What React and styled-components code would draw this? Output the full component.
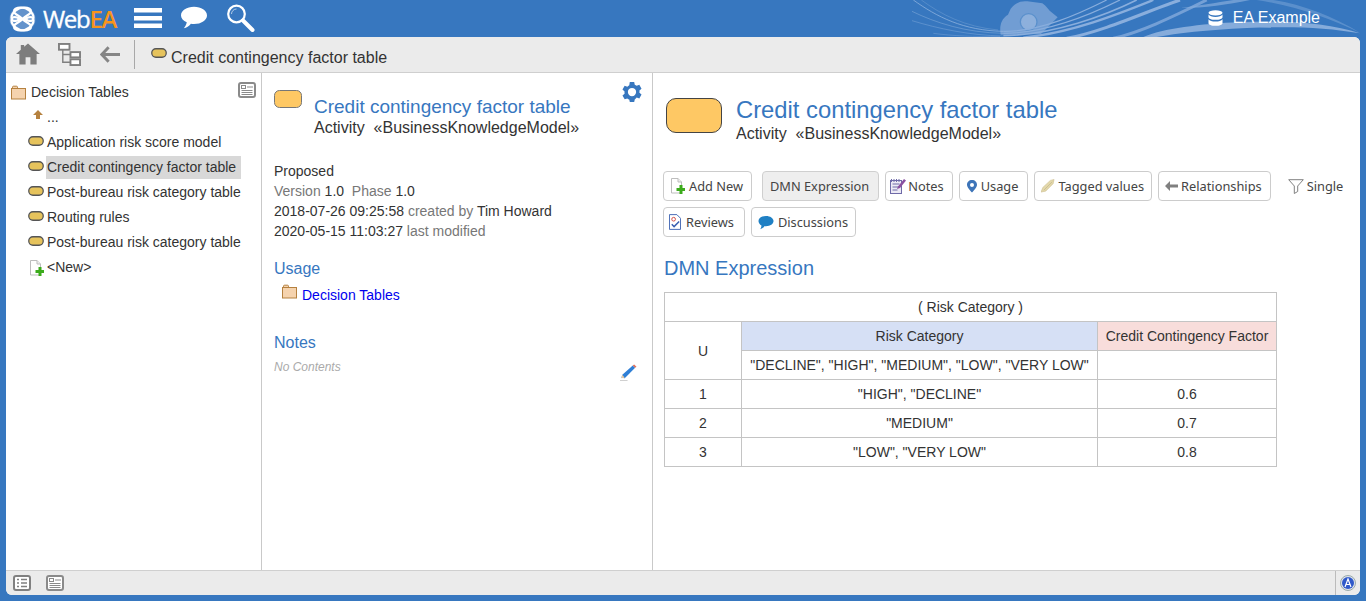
import React from "react";
import styled, { createGlobalStyle } from "styled-components";

const Global = createGlobalStyle`
  html, body { margin: 0; padding: 0; height: 100%; overflow: hidden; }
  body { font-family: "Liberation Sans", Arial, sans-serif; background: #3777bf; }
  #root { height: 100%; }
`;

const Page = styled.div`
  width: 1366px; height: 601px; display: flex; flex-direction: column;
  background: #3777bf; color: #333; font-size: 14px;
`;
const Header = styled.header`
  position: relative; height: 37px; flex: none; display: flex; align-items: flex-start;
  padding-left: 9px; overflow: hidden;
`;
const Waves = styled.svg`
  position: absolute; left: 880px; top: 0; width: 486px; height: 37px;
`;
const LogoWrap = styled.div`
  display: flex; align-items: center; height: 37px; width: 125px; flex: none;
  position: relative;
`;
const LogoText = styled.span`
  font-family: "Open Sans", sans-serif; font-size: 24px; letter-spacing: -1.3px; color: #fff;
  margin-left: 7px; font-weight: 400; line-height: 36px; -webkit-text-stroke: .35px #fff;
  b { color: #f7941d; font-weight: 600; -webkit-text-stroke: 0; }
`;
const HeadIcons = styled.div`
  display: flex; align-items: flex-start; position: relative;
`;
const HeadIcon = styled.svg`
  display: block; margin-top: ${p => p.$top}px; margin-right: ${p => p.$gap}px; flex: none;
`;
const Model = styled.div`
  position: absolute; right: 46px; top: 8px; display: flex; align-items: center; gap: 10px;
  color: #fff; font-size: 16px; line-height: 20px;
`;
const Frame = styled.div`
  flex: none; margin: 0 6px; height: 558px; display: flex; flex-direction: column;
  background: #fff; border-radius: 6px; overflow: hidden;
`;
const Toolbar = styled.div`
  flex: none; background: #ebebeb; border-bottom: 1px solid #cfcfcf;
  display: flex; align-items: center; box-sizing: content-box; height: 35px;
`;
const ToolBtn = styled.svg`
  display: block; flex: none; margin-left: ${p => p.$left}px; margin-top: ${p => p.$top || 0}px;
`;
const ToolSep = styled.div`
  width: 1px; height: 29px; background: #a8a8a8; margin-left: 14px;
`;
const Crumb = styled.div`
  display: flex; align-items: center; margin-left: 16px; font-size: 16px; color: #333;
  span { margin-left: 4px; position: relative; top: 3px; }
`;
const Body = styled.div`
  flex: 1; display: flex; min-height: 0;
`;
const LeftPane = styled.nav`
  position: relative; width: 255px; flex: none; border-right: 1px solid #c9c9c9; padding-top: 6px;
`;
const TreeRoot = styled.div`
  display: flex; align-items: center; height: 26px; padding-left: 5px; gap: 4px; color: #333;
`;
const TreeRow = styled.div`
  display: flex; align-items: center; height: 25px; padding-left: 22px; gap: 2px;
`;
const TreeIconBox = styled.span`
  width: 16px; height: 25px; flex: none; display: flex; align-items: center; justify-content: center;
`;
const TreeLabel = styled.span`
  padding: 0 5px 0 1px; height: 23px; line-height: 23px; white-space: nowrap;
  background: ${p => (p.$selected ? "#d8d8d8" : "transparent")};
`;
const PaneToggle = styled.div`
  position: absolute; right: 5px; top: 9px;
`;
const MidPane = styled.section`
  position: relative; flex: none; border-right: 1px solid #c9c9c9;
  padding: 0 12px; box-sizing: content-box; width: 366px;
`;
const MidHead = styled.div`
  display: flex; padding-top: 17px; height: 70px; box-sizing: border-box;
`;
const MidTitleBox = styled.div`
  margin-left: 12px; padding-top: 6px;
`;
const MidTitle = styled.div`
  color: #3777bf; font-size: 19px; line-height: 22px;
`;
const Sub = styled.div`
  color: #333; font-size: 16px; line-height: 20px; white-space: pre;
`;
const Gear = styled.svg`
  position: absolute; right: 9px; top: 8px;
`;
const Meta = styled.div`
  margin-top: 18px; line-height: 20px; font-size: 14px; color: #333;
  i { font-style: normal; color: #777; }
`;
const SectionTitle = styled.div`
  color: #3777bf; font-size: 16px; line-height: 20px; margin-top: ${p => p.$top}px;
`;
const UsageLink = styled.div`
  display: flex; align-items: center; padding-left: 8px; margin-top: 6px; height: 20px;
  a { color: #0000ee; margin-left: 4px; text-decoration: none; }
`;
const UsageFolder = styled.span`
  display: block; margin-top: -7px;
`;
const Empty = styled.div`
  font-style: italic; color: #aaa; font-size: 12px; line-height: 16px; margin-top: 6px;
`;
const Pencil = styled.svg`
  position: absolute; right: 15px; top: 291px;
`;
const RightPane = styled.section`
  flex: 1; min-width: 0; padding: 0 10px;
`;
const RightHead = styled.div`
  display: flex; padding: 25px 0 0 3px; height: 98px; box-sizing: border-box;
`;
const BigShape = styled.div`
  width: 54px; height: 33px; flex: none; background: #fec864; border: 1px solid #444;
  border-radius: 10px;
`;
const RightTitleBox = styled.div`
  margin-left: 14px; margin-top: -2px;
`;
const RightTitle = styled.div`
  color: #3777bf; font-size: 23.8px; line-height: 28px;
`;
const Tabs = styled.div`
  display: flex; flex-direction: column; gap: 6px;
`;
const TabRow = styled.div`
  display: flex; gap: 6px; align-items: center;
`;
const Tab = styled.div`
  display: flex; align-items: center; gap: ${p => p.$gap ?? 4}px; height: 30px; box-sizing: border-box;
  padding: 0 ${p => p.$pr ?? 8}px 0 ${p => p.$pl ?? 6}px;
  border: 1px solid ${p => (p.$active ? "#cfcfcf" : "#ccc")}; border-radius: 4px;
  background: ${p => (p.$active ? "#eee" : "#fff")};
  margin-left: ${p => (p.$active ? 4 : 0)}px;
  font-family: "Noto Sans", sans-serif; font-size: 12.8px; color: #444; white-space: nowrap;
`;
const Filter = styled.div`
  display: flex; align-items: center; gap: 3px; margin-left: 11px; height: 30px;
  font-family: "Noto Sans", sans-serif; font-size: 12.8px; color: #444;
`;
const DmnTitle = styled.h2`
  margin: 19px 0 0 1px; font-weight: normal; color: #3777bf; font-size: 20px; line-height: 24px;
`;
const Table = styled.table`
  border-collapse: collapse; margin: 12px 0 0 1px; width: 612px; table-layout: fixed;
  font-size: 14px; color: #333;
  col:nth-child(1) { width: 77px; } col:nth-child(2) { width: 356px; } col:nth-child(3) { width: 179px; }
`;
const Cell = styled.td`
  border: 1px solid #c4c4c4; height: 28px; padding: 0; text-align: center; box-sizing: content-box;
  background: ${p => p.$bg || "#fff"}; white-space: nowrap;
`;
const StatusBar = styled.footer`
  height: 25px; flex: none; background: #ebebeb; border-top: 1px solid #cfcfcf; display: flex;
  align-items: center; box-sizing: border-box;
`;
const StatusBtn = styled.div`
  margin-left: ${p => p.$left}px; flex: none;
`;
const StatusRight = styled.div`
  margin-left: auto; height: 24px; width: 24px; border-left: 1px solid #bbb; display: flex;
  align-items: center; justify-content: center;
`;

const Pill = ({ w = 16, h = 9 }) => (
  <svg width={w} height={h + 1} viewBox={`0 0 ${w} ${h + 1}`} style={{ display: "block", marginTop: -4 }}>
    <rect x=".75" y=".75" width={w - 1.5} height={h - 0.5} rx={h / 2 - 0.3} fill="#e6c35c" stroke="#555" strokeWidth="1.3" />
  </svg>
);
const Folder = () => (
  <svg width="16" height="15" viewBox="0 0 16 15" style={{ display: "block" }}>
    <path d="M1.500 4V2.200c0-.6.400-1 1-1h3c.6 0 1 .4 1 1V4" fill="#f5d3ae" stroke="#b5813f" />
    <rect x=".5" y="3.500" width="14" height="10.500" fill="#f5d3ae" stroke="#b5813f" />
  </svg>
);
const NewDoc = ({ s = 15 }) => (
  <svg width={s} height={s + 1} viewBox="0 0 15 16" style={{ display: "block" }}>
    <path d="M1.500.5h6.500l3.500 3.500v11h-10z" fill="#fff" stroke="#bdbdbd" />
    <path d="M8 .5v3.500h3.500" fill="#eee" stroke="#bdbdbd" />
    <path d="M6.500 10h3V7h3v3h2.500v3h-2.500v3h-3v-3h-3z" fill="#3cab1c" />
  </svg>
);
const Panel = ({ size = 18 }) => (
  <svg width={size} height={size - 2} viewBox="0 0 18 16" style={{ display: "block" }}>
    <rect x="1" y="1" width="16" height="14" rx="2" fill="#fff" stroke="#8a8a8a" strokeWidth="2" />
    <rect x="3.500" y="3.500" width="4" height="3" fill="none" stroke="#8a8a8a" />
    <path d="M9 5h6M3.500 8.500h11M3.500 10.500h11M3.500 12.500h11" stroke="#8a8a8a" />
  </svg>
);

const treeItems = [
  "Application risk score model",
  "Credit contingency factor table",
  "Post-bureau risk category table",
  "Routing rules",
  "Post-bureau risk category table",
];

export default function App() {
  return (
    <Page>
      <Global />
      <Header>
        <Waves viewBox="0 0 1458 111" preserveAspectRatio="none">
          <path d="M362 104c-4-24 0-47 22-60l8-18c15-18 30-24 50-22l45 6c12 8 16 16 22 22l24 20-50 50z" fill="#719dd3" />
          <circle cx="446" cy="66" r="25" fill="#8db0dc" stroke="#5a90cc" strokeWidth="4" />
          <g fill="none" stroke="#9dbde4">
            <path d="M100 0c70 50 150 92 270 94" strokeWidth="2" />
            <path d="M124 0c60 44 130 80 230 90" strokeWidth="1.200" opacity=".7" />
            <path d="M96 34c70 34 160 64 274 66" strokeWidth="1.500" opacity=".8" />
            <path d="M96 62c80 24 170 44 274 46" strokeWidth="1.500" opacity=".7" />
            <path d="M160 100c60 8 120 10 200 10" strokeWidth="1.500" opacity=".6" />
          </g>
          <g fill="none" stroke="#89aedd">
            <path d="M370 94c110 2 230-54 310-94" strokeWidth="3.500" />
            <path d="M370 100c130 0 270-60 350-100" strokeWidth="4" />
            <path d="M370 107c150-2 310-62 400-107" strokeWidth="5" />
            <path d="M430 113c150-16 290-73 390-113" strokeWidth="7" />
            <path d="M560 115c110-20 250-85 340-115" strokeWidth="9" />
            <path d="M700 115c80-18 170-60 280-115" strokeWidth="9" opacity=".75" />
          </g>
          <path d="M790 111c60-26 170-39 290-45 150-6 270 4 360 34-100-18-210-22-340-16-120 6-210 16-270 27z" fill="#86acdb" />
          <path d="M900 24c50-6 110-16 160-24h50c-70 14-130 24-210 24z" fill="#86acdb" opacity=".7" />
          <path d="M1130 0h50c90 14 180 50 260 98-90-42-190-80-310-98z" fill="#86acdb" opacity=".45" />
        </Waves>
        <LogoWrap>
          <svg width="27" height="28" viewBox="0 0 27 28" style={{ display: "block" }}>
            <circle cx="13.500" cy="14" r="13" fill="#8fb0da" opacity=".5" />
            <g fill="none" stroke="#fff" strokeWidth="2.200">
              <path d="M13.500 14C10 10 5 9.500 5 6.500 5 3.500 8.500 2.500 12 2.500c6 0 12.500 5 12.500 10 0 3.500-3 4-5.500 3-2-1-3.500-1-5.500-1.500z" />
              <path d="M13.500 14C17 18 22 18.500 22 21.500c0 3-3.500 4-7 4-6 0-12.500-5-12.500-10 0-3.500 3-4 5.500-3 2 1 3.500 1 5.500 1.500z" />
              <path d="M13.500 14C17 10 22 9.500 22 6.500 22 3.500 18.500 2.500 15 2.500c-6 0-12.500 5-12.500 10 0 3.500 3 4 5.500 3 2-1 3.500-1 5.500-1.500z" />
              <path d="M13.500 14C10 18 5 18.500 5 21.500c0 3 3.500 4 7 4 6 0 12.500-5 12.500-10 0-3.500-3-4-5.500-3-2 1-3.500 1-5.500 1.500z" />
            </g>
          </svg>
          <LogoText>Web<b>EA</b></LogoText>
        </LogoWrap>
        <HeadIcons>
          <HeadIcon $top={8} $gap={19} width="28" height="20" viewBox="0 0 28 20">
            <path d="M0 0h28v4.500H0zM0 8h28v4.500H0zM0 15.500h28V20H0z" fill="#fff" />
          </HeadIcon>
          <HeadIcon $top={5} $gap={20} width="26" height="25" viewBox="0 0 28 25">
            <path d="M14 1c7.700 0 14 4 14 9.300 0 5.200-6.300 9.200-14 9.200-1.200 0-2.300-.1-3.300-.3C8.500 22 6 23.500 3 24c1.500-1.500 2.800-3.600 3.200-6.300C2.500 16 0 13.400 0 10.300 0 5 6.300 1 14 1z" fill="#fff" />
          </HeadIcon>
          <HeadIcon $top={4} $gap={0} width="28" height="28" viewBox="0 0 28 28">
            <circle cx="9.500" cy="10" r="8.300" fill="none" stroke="#fff" strokeWidth="2.200" />
            <path d="M16 16.500l9.500 9.500" stroke="#fff" strokeWidth="4" strokeLinecap="round" />
            <path d="M4.500 10a5 5 0 0 1 5-5" stroke="#fff" fill="none" opacity=".6" />
          </HeadIcon>
        </HeadIcons>
        <Model>
          <svg width="15" height="16" viewBox="0 0 15 16" style={{ display: "block" }}>
            <ellipse cx="7.500" cy="2.800" rx="7" ry="2.600" fill="#fff" />
            <path d="M.5 4.600c1 1.700 3.600 2.400 7 2.400s6-.7 7-2.400v2.600c0 1.500-3 2.600-7 2.600s-7-1.100-7-2.600z" fill="#fff" />
            <path d="M.5 9.200c1 1.700 3.600 2.300 7 2.300s6-.6 7-2.300v4c0 1.500-3 2.600-7 2.600s-7-1.100-7-2.600z" fill="#fff" />
          </svg>
          <span>EA Example</span>
        </Model>
      </Header>
      <Frame>
        <Toolbar>
          <ToolBtn $left={10} $top={-1} width="24" height="22" viewBox="0 0 25 22">
            <path d="M12.500 0L25 11h-3.500v11h-6.500v-7.500h-5V22H3.500V11H0L5 6.600V1.500h3.500v2z" fill="#7d7d7d" />
          </ToolBtn>
          <ToolBtn $left={18} $top={-1} width="23" height="23" viewBox="0 0 24 24">
            <g fill="#fff" stroke="#808080" strokeWidth="2">
              <rect x="1" y="1" width="11" height="6" />
              <rect x="13" y="9.500" width="10" height="5.500" />
              <rect x="13" y="17" width="10" height="6" />
            </g>
            <path d="M5 7v13h8M5 12h8" fill="none" stroke="#808080" strokeWidth="1.500" />
          </ToolBtn>
          <ToolBtn $left={19} width="20" height="17" viewBox="0 0 22 18">
            <path d="M9.500 1L2 9l7.500 8M2.500 9H22" fill="none" stroke="#858585" strokeWidth="3.200" />
          </ToolBtn>
          <ToolSep />
          <Crumb>
            <Pill />
            <span>Credit contingency factor table</span>
          </Crumb>
        </Toolbar>
        <Body>
          <LeftPane>
            <TreeRoot>
              <Folder />
              <span>Decision Tables</span>
            </TreeRoot>
            <TreeRow>
              <TreeIconBox>
                <svg width="10" height="9" viewBox="0 0 10 9" style={{ display: "block", marginTop: -7, marginLeft: 3 }}>
                  <path d="M5 0l5 5H7v4H3V5H0z" fill="#b5813f" />
                </svg>
              </TreeIconBox>
              <TreeLabel>...</TreeLabel>
            </TreeRow>
            {treeItems.map((t, i) => (
              <TreeRow key={i}>
                <TreeIconBox><Pill /></TreeIconBox>
                <TreeLabel $selected={i === 1}>{t}</TreeLabel>
              </TreeRow>
            ))}
            <TreeRow>
              <TreeIconBox><NewDoc /></TreeIconBox>
              <TreeLabel>&lt;New&gt;</TreeLabel>
            </TreeRow>
            <PaneToggle><Panel /></PaneToggle>
          </LeftPane>
          <MidPane>
            <MidHead>
              <svg width="28" height="18" viewBox="0 0 28 18" style={{ display: "block", flex: "none" }}>
                <rect x=".5" y=".5" width="27" height="17" rx="5" fill="#fec864" stroke="#777" />
              </svg>
              <MidTitleBox>
                <MidTitle>Credit contingency factor table</MidTitle>
                <Sub>{"Activity  «BusinessKnowledgeModel»"}</Sub>
              </MidTitleBox>
            </MidHead>
            <Gear width="22" height="22" viewBox="0 0 24 24">
              <path fillRule="evenodd" fill="#3777bf" d="M9.600 1h4.800l.6 3a8 8 0 0 1 2.100 1.200l2.900-1 2.400 4.200-2.300 2a8 8 0 0 1 0 2.400l2.300 2-2.400 4.200-2.900-1A8 8 0 0 1 15 20.200l-.6 2.800H9.600L9 20.200A8 8 0 0 1 6.900 19l-2.900 1-2.400-4.200 2.300-2a8 8 0 0 1 0-2.400l-2.300-2L4 5.200l2.900 1A8 8 0 0 1 9 4.600zM12 7.500a4.500 4.500 0 1 0 0 9 4.500 4.500 0 0 0 0-9z" />
            </Gear>
            <Meta>
              <div>Proposed</div>
              <div><i>Version</i> 1.0 &nbsp;<i>Phase</i> 1.0</div>
              <div>2018-07-26 09:25:58 <i>created by</i> Tim Howard</div>
              <div>2020-05-15 11:03:27 <i>last modified</i></div>
            </Meta>
            <SectionTitle $top={18}>Usage</SectionTitle>
            <UsageLink>
              <UsageFolder><Folder /></UsageFolder>
              <a href="#u">Decision Tables</a>
            </UsageLink>
            <SectionTitle $top={28}>Notes</SectionTitle>
            <Empty>No Contents</Empty>
            <Pencil width="17" height="17" viewBox="0 0 18 18">
              <path d="M1.500 14.500l1-3L13.500 1.500l2.500 2.500L5 15z" fill="#2f7fd6" />
              <path d="M13.500 1.500l1.500-1 2.500 2.500-1.500 1z" fill="#e0705a" />
              <path d="M1.500 15l1-3.500 2.500 3z" fill="#e8c9a0" />
              <path d="M0 17.500h8" stroke="#ccc" strokeWidth="1" />
            </Pencil>
          </MidPane>
          <RightPane>
            <RightHead>
              <BigShape />
              <RightTitleBox>
                <RightTitle>Credit contingency factor table</RightTitle>
                <Sub>{"Activity  «BusinessKnowledgeModel»"}</Sub>
              </RightTitleBox>
            </RightHead>
            <Tabs>
              <TabRow>
                <Tab $pl={6}><NewDoc s={15} />Add New</Tab>
                <Tab $active $pl={7} $pr={9}>DMN Expression</Tab>
                <Tab $pl={4} $gap={2}>
                  <svg width="16" height="16" viewBox="0 0 16 16" style={{ display: "block" }}>
                    <rect x=".5" y="2.500" width="11" height="13" fill="#eceaf5" stroke="#6f6aa8" />
                    <path d="M2.500 6h7M2.500 9h7M2.500 12h5" stroke="#6f6aa8" />
                    <path d="M1.500 1v3M4 1v3M6.500 1v3M9 1v3" stroke="#6f6aa8" />
                    <path d="M7 11l1-2.500L14 1l2 1.500L10 10z" fill="#8a4fa0" />
                  </svg>
                  Notes
                </Tab>
                <Tab $pl={7} $gap={4} $pr={9}>
                  <svg width="10" height="13" viewBox="1 .5 10 13" style={{ display: "block" }}>
                    <path fillRule="evenodd" d="M6 .5C9 .5 11 2.600 11 5.300 11 8 8 11 6 13 4 11 1 8 1 5.300 1 2.600 3 .5 6 .5zM6 3.500a2 2 0 1 0 0 4 2 2 0 0 0 0-4z" fill="#3d74b8" />
                  </svg>
                  Usage
                </Tab>
                <Tab $pl={6} $gap={3} $pr={7}>
                  <svg width="14" height="14" viewBox="0 0 15 15" style={{ display: "block" }}>
                    <path d="M0 14l2-5L10 1.500 14 .5 13 5 5 13z" fill="#e3d8aa" stroke="#cbbd8e" strokeWidth=".6" />
                    <path d="M3 12l9-9" stroke="#c4b88f" strokeWidth=".8" />
                  </svg>
                  Tagged values
                </Tab>
                <Tab $pl={6} $gap={3}>
                  <svg width="13" height="10" viewBox="0 0 13 10" style={{ display: "block" }}>
                    <path d="M5 0v3.500h8v3H5V10L0 5z" fill="#808080" />
                  </svg>
                  Relationships
                </Tab>
                <Filter>
                  <svg width="16" height="15" viewBox="0 0 16 15" style={{ display: "block" }}>
                    <path d="M.7.700h14.600L9.700 7v5.500L6.300 14.500V7z" fill="#fff" stroke="#808080" />
                  </svg>
                  Single
                </Filter>
              </TabRow>
              <TabRow>
                <Tab $pl={5} $gap={5} $pr={10}>
                  <svg width="12" height="16" viewBox="0 0 13 17" style={{ display: "block" }}>
                    <path d="M.5.500h8l4 4v12H.500z" fill="#fff" stroke="#3a5fb0" />
                    <circle cx="5" cy="5.500" r="2" fill="none" stroke="#d0453f" />
                    <path d="M3 11l2.500 2.500L11 8" fill="none" stroke="#3a5fb0" strokeWidth="1.600" />
                  </svg>
                  Reviews
                </Tab>
                <Tab $pl={6} $gap={4} $pr={7}>
                  <svg width="16" height="15" viewBox="0 0 17 15" style={{ display: "block" }}>
                    <path d="M8.500.500c4.500 0 8 2.400 8 5.500s-3.500 5.500-8 5.500c-.6 0-1.200 0-1.800-.1C5.500 13.300 4 14.300 2.300 14.700c.8-1 1.300-2.200 1.400-3.900C1.800 9.800.5 8 .5 6 .5 2.900 4 .5 8.500.500z" fill="#1f80c4" />
                  </svg>
                  Discussions
                </Tab>
              </TabRow>
            </Tabs>
            <DmnTitle>DMN Expression</DmnTitle>
            <Table>
              <colgroup><col /><col /><col /></colgroup>
              <tbody>
                <tr><Cell colSpan={3}>( Risk Category )</Cell></tr>
                <tr>
                  <Cell rowSpan={2}>U</Cell>
                  <Cell $bg="#d6e0f5">Risk Category</Cell>
                  <Cell $bg="#f8dddb">Credit Contingency Factor</Cell>
                </tr>
                <tr>
                  <Cell>"DECLINE", "HIGH", "MEDIUM", "LOW", "VERY LOW"</Cell>
                  <Cell />
                </tr>
                <tr><Cell>1</Cell><Cell>"HIGH", "DECLINE"</Cell><Cell>0.6</Cell></tr>
                <tr><Cell>2</Cell><Cell>"MEDIUM"</Cell><Cell>0.7</Cell></tr>
                <tr><Cell>3</Cell><Cell>"LOW", "VERY LOW"</Cell><Cell>0.8</Cell></tr>
              </tbody>
            </Table>
          </RightPane>
        </Body>
        <StatusBar>
          <StatusBtn $left={7}>
            <svg width="18" height="16" viewBox="0 0 18 16" style={{ display: "block" }}>
              <rect x="1" y="1" width="16" height="14" rx="2" fill="#fff" stroke="#808080" strokeWidth="2" />
              <path d="M4 4.500h2M8 4.500h6M4 8h2M8 8h6M4 11.500h2M8 11.500h6" stroke="#808080" strokeWidth="1.600" />
            </svg>
          </StatusBtn>
          <StatusBtn $left={15}><Panel /></StatusBtn>
          <StatusRight>
            <svg width="16" height="16" viewBox="0 0 16 16" style={{ display: "block" }}>
              <circle cx="8" cy="8" r="7.500" fill="#dfe3ec" stroke="#9aa" strokeWidth="1" />
              <circle cx="8" cy="8" r="6" fill="#2f59c9" />
              <path d="M5 12L8 4l3 8M6 9.500h4" fill="none" stroke="#fff" strokeWidth="1.200" />
            </svg>
          </StatusRight>
        </StatusBar>
      </Frame>
    </Page>
  );
}
